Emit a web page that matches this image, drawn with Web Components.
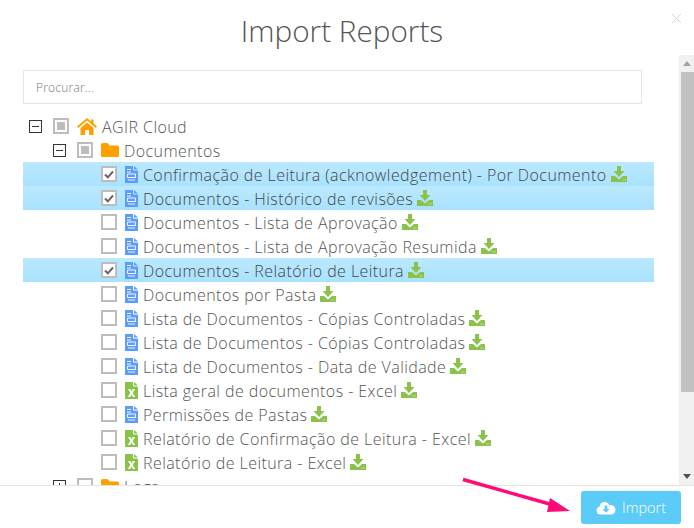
<!DOCTYPE html>
<html><head><meta charset="utf-8">
<style>
html,body{margin:0;padding:0;background:#fff;overflow:hidden}
body{font-family:"Open Sans","Liberation Sans",sans-serif;color:#666}
</style></head><body>
<template id="t-modal"><style>
:host{display:flex;flex-direction:column;width:694px;height:528px;position:relative;overflow:hidden;background:#fff}
header{height:55px;flex:none;display:flex;justify-content:center}
h1{margin:9px 0 0 -10px;font-size:29.7px;line-height:44px;height:44px;font-weight:300;color:#555}
.close{position:absolute;left:671px;top:13px;width:11px;height:11px}
.body{flex:1;min-height:0;display:flex}
.main{flex:1;min-width:0;display:flex;flex-direction:column;padding:15px 25px 0 23px}
.search{flex:none;height:34px;box-sizing:border-box;border:1px solid #e5e5e5;display:flex;align-items:center;padding-left:12px;font-size:12px;font-weight:300;letter-spacing:.2px;color:#777;margin-right:12px}
.list{flex:1;min-height:0;overflow:hidden;padding-top:10px}
footer{flex:none;height:43px;box-sizing:border-box;border-top:1px solid #e5e5e5;display:flex;justify-content:flex-end;align-items:flex-start;padding:5px 13px 0 0}
.arrow{position:absolute;left:455px;top:470px;width:125px;height:52px}
</style>
<header><h1><slot name="title"></slot></h1></header>
<svg class="close" viewBox="0 0 11 11"><path d="M1 1l9 9M10 1l-9 9" stroke="#d4d4d4" stroke-width="1" fill="none"/></svg>
<div class="body"><div class="main"><div class="search"><slot name="search"></slot></div><div class="list"><slot></slot></div></div><x-scrollbar></x-scrollbar></div>
<footer><slot name="action"></slot></footer>
<svg class="arrow" viewBox="0 0 125 52"><path d="M8 9.500L100 35.500" stroke="#ff0a78" stroke-width="3.500" fill="none"/><path d="M95 28L115 41L92 42Z" fill="#ff0a78"/></svg>
</template>
<template id="t-sb"><style>
:host{display:flex;flex-direction:column;flex:none;width:15px;background:#f1f1f1;box-sizing:border-box}
.b{flex:none;height:17px;display:flex;align-items:center;justify-content:center;padding-left:1px}
.t{flex:none;height:320px;margin-left:2px;background:#c1c1c1}
.s{flex:1}
</style><div class="b"><svg width="8" height="5" viewBox="0 0 8 5"><path d="M4 0l4 5H0z" fill="#a3a3a3"/></svg></div><div class="t"></div><div class="s"></div><div class="b"><svg width="8" height="5" viewBox="0 0 8 5"><path d="M0 0h8L4 5z" fill="#505050"/></svg></div></template>
<template id="t-row"><style>
:host{display:flex;align-items:center;height:24px;box-sizing:border-box;font-size:16px;font-weight:300;letter-spacing:.43px;color:#555;white-space:nowrap;padding-left:calc(6px + 24px * var(--lv,0))}
:host([checked]){background:linear-gradient(#bbe9ff,#a9e2fe);color:#444}
.e{flex:none;width:24px;height:13px}
.e svg,.c,.i svg,.d svg{display:block}
.cw{flex:none;width:24px}
.c{width:16px;height:16px;box-sizing:border-box;border:2px solid #bdbdbd;background:#fff;display:flex;align-items:center;justify-content:center}
.i{flex:none;display:block}
.t{display:block;padding-top:2px}
.d{flex:none;margin-left:4px}
</style><span class="e"></span><span class="cw"><span class="c"></span></span><span class="i"></span><span class="t"><slot></slot></span><span class="d"></span></template>
<template id="t-btn"><style>
:host{display:flex;align-items:center;box-sizing:border-box;width:100px;height:33px;background:#5bcbf7;border-radius:3px;color:#fff;font-size:14.5px;font-weight:300;padding-left:15px;gap:6px}
svg{display:block}
</style><svg width="20" height="15" viewBox="0 0 20 15"><path d="M4.500 14.500a4 4 0 0 1-.8-7.900 4.800 4.800 0 0 1 4.500-4.600 5.300 5.300 0 0 1 5.200 3.200 4.700 4.700 0 0 1 6 4.700 4.600 4.600 0 0 1-4.400 4.600z" fill="#fff"/><path d="M8.700 5.500h2.600v3.500h2.200L10 12.700 6.500 9h2.200z" fill="#5bcbf7"/></svg><slot></slot></template>

<x-modal>
<span slot="title">Import Reports</span>
<span slot="search">Procurar...</span>
<x-row level="0" exp="minus" cb="part" icon="home">AGIR Cloud</x-row>
<x-row level="1" exp="minus" cb="part" icon="folder">Documentos</x-row>
<x-row level="2" checked icon="doc" dl>Confirmação de Leitura (acknowledgement) - Por Documento</x-row>
<x-row level="2" checked icon="doc" dl>Documentos - Histórico de revisões</x-row>
<x-row level="2" icon="doc" dl>Documentos - Lista de Aprovação</x-row>
<x-row level="2" icon="doc" dl>Documentos - Lista de Aprovação Resumida</x-row>
<x-row level="2" checked icon="doc" dl>Documentos - Relatório de Leitura</x-row>
<x-row level="2" icon="doc" dl>Documentos por Pasta</x-row>
<x-row level="2" icon="doc" dl>Lista de Documentos - Cópias Controladas</x-row>
<x-row level="2" icon="doc" dl>Lista de Documentos - Cópias Controladas</x-row>
<x-row level="2" icon="doc" dl>Lista de Documentos - Data de Validade</x-row>
<x-row level="2" icon="xls" dl>Lista geral de documentos - Excel</x-row>
<x-row level="2" icon="doc" dl>Permissões de Pastas</x-row>
<x-row level="2" icon="xls" dl>Relatório de Confirmação de Leitura - Excel</x-row>
<x-row level="2" icon="xls" dl>Relatório de Leitura - Excel</x-row>
<x-row level="1" exp="plus" icon="folder">Logs</x-row>
<x-button slot="action">Import</x-button>
</x-modal>
<script>
const tpl=id=>document.getElementById(id).content.cloneNode(true);
class Base extends HTMLElement{constructor(id){super();this.attachShadow({mode:'open'}).appendChild(tpl(id));}}
customElements.define('x-scrollbar',class extends Base{constructor(){super('t-sb')}});
customElements.define('x-modal',class extends Base{constructor(){super('t-modal')}});
customElements.define('x-button',class extends Base{constructor(){super('t-btn')}});
const ICONS={
home:'<svg width="20" height="17" viewBox="0 0 20 17" style="margin-right:5px"><path d="M10 0L0 8.600l1.200 1.300L10 2.500l8.800 7.400L20 8.600 16.500 5.600V1.500h-2.500v2L10 0z" fill="#ffa000"/><path d="M3.500 10L10 4.500l6.500 5.500v7h-4.500v-5H8v5H3.500z" fill="#ffa000"/></svg>',
folder:'<svg width="18" height="14" viewBox="0 0 18 14" style="margin-right:5px"><path d="M1.500 0h5l2 2.500h8A1.500 1.500 0 0 1 18 4v8.500a1.500 1.500 0 0 1-1.500 1.500h-15A1.500 1.500 0 0 1 0 12.500v-11A1.500 1.500 0 0 1 1.500 0z" fill="#ffa000"/></svg>',
doc:'<svg width="13" height="17" viewBox="0 0 13 17" style="margin-right:5px"><path d="M0 0h8v4.500h5V17H0z" fill="#5c9dfb"/><path d="M9 0l4 3.500H9z" fill="#5c9dfb"/><path d="M2 3h4v1H2zM2 5.500h4v1H2zM3 13.500h7v1H3z" fill="#eaf2ff"/><path d="M2.500 8h8v3.500h-8z" fill="none" stroke="#f2f7ff"/></svg>',
xls:'<svg width="13" height="17" viewBox="0 0 13 17" style="margin-right:5px"><path d="M0 0h8v4.500h5V17H0z" fill="#8bc34a"/><path d="M9 0l4 3.500H9z" fill="#8bc34a"/><path d="M3 7h2.300l1.200 2.200L7.700 7H10L7.700 11l2.500 4H7.900l-1.400-2.500L5.100 15H2.800l2.500-4z" fill="#fff"/></svg>'};
const DL='<svg width="16" height="16" viewBox="0 0 16 16"><path d="M6 0h4v5h3.500L8 11 2.500 5H6z" fill="#8bc34a"/><path d="M0 10h4l4 3.500L12 10h4v6H0z" fill="#8bc34a"/><path d="M11.500 14h1M13.500 14h1" stroke="#dff0c8"/></svg>';
customElements.define('x-row',class extends Base{constructor(){super('t-row')}
connectedCallback(){const r=this.shadowRoot;this.style.setProperty('--lv',this.getAttribute('level')||0);
const e=this.getAttribute('exp');
if(e)r.querySelector('.e').innerHTML='<svg width="13" height="13" viewBox="0 0 13 13"><rect x=".5" y=".5" width="12" height="12" fill="#fff" stroke="#333"/><path d="M3 6.500h7'+(e==='plus'?'M6.500 3v7':'')+'" stroke="#333"/></svg>';
const c=r.querySelector('.c');
if(this.getAttribute('cb')==='part')c.innerHTML='<span style="display:block;width:8px;height:8px;background:#bdbdbd"></span>';
if(this.hasAttribute('checked'))c.innerHTML='<svg width="10" height="9" viewBox="0 0 10 9"><path d="M1 4.500l2.800 2.800L9 1.500" fill="none" stroke="#666" stroke-width="2"/></svg>';
r.querySelector('.i').innerHTML=ICONS[this.getAttribute('icon')]||'';
if(this.hasAttribute('dl'))r.querySelector('.d').innerHTML=DL;}});
</script>
</body></html>
